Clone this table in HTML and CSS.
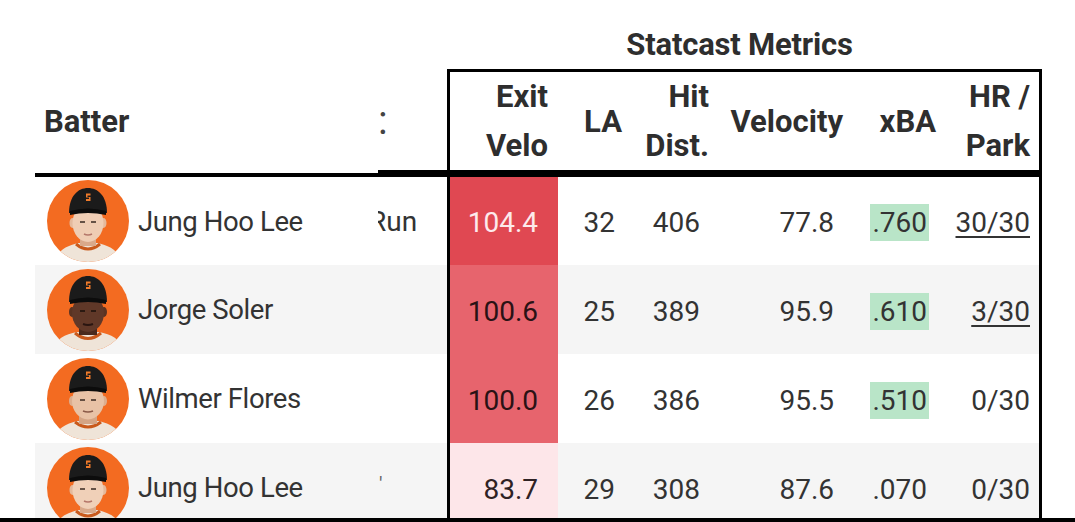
FILE: index.html
```html
<!DOCTYPE html>
<html>
<head>
<meta charset="utf-8">
<link rel="stylesheet" href="styles.css">
</head>
<body>
<div class="page">
  <div class="sheet">
    <div class="fixed">
      <div class="fixed-head">
        <div class="th-batter">Batter</div>
        <div class="th-clip"><span class="colon">:</span></div>
      </div>

      <div class="frow first">
        <div class="batter">
          <svg class="av" viewBox="0 0 82 82">
            <clipPath id="c1"><circle cx="41" cy="41" r="41"/></clipPath>
            <g clip-path="url(#c1)">
              <rect width="82" height="82" fill="#f36b21"/>
              <path d="M8 82 C10 70 20 66 31 63 L51 63 C62 66 72 70 74 82 Z" fill="#efe4d8"/>
              <path d="M29 64 Q41 74 53 64" fill="none" stroke="#c95a1c" stroke-width="3"/>
              <rect x="33" y="52" width="16" height="14" fill="#d9a98a"/>
              <ellipse cx="25.5" cy="43" rx="3" ry="5" fill="#e4b99c"/>
              <ellipse cx="56.5" cy="43" rx="3" ry="5" fill="#e4b99c"/>
              <ellipse cx="41" cy="43" rx="15.5" ry="19" fill="#efcdb4"/>
              <path d="M22 33 C22 16 31 8 41 8 C51 8 60 16 60 33 Z" fill="#1b1b1b"/>
              <path d="M23 31 Q41 26 59 31 L59 35 Q41 31 23 35 Z" fill="#0c0c0c"/>
              <path d="M39 13.5 h4.5 v2 h-3 v1.5 h3 v4 h-4.5 v-2 h3 v-1.5 h-3 z" fill="#f07a2a"/>
              <path d="M33 42 h5 M44 42 h5" stroke="#3a2a22" stroke-width="1.6"/>
              <path d="M37 54 q4 2 8 0" stroke="#b5776a" stroke-width="1.6" fill="none"/>
            </g>
          </svg>
          <span class="name">Jung Hoo Lee</span>
        </div>
        <div class="clip"><span class="cut">Run</span></div>
      </div>

      <div class="frow alt">
        <div class="batter">
          <svg class="av" viewBox="0 0 82 82">
            <clipPath id="c2"><circle cx="41" cy="41" r="41"/></clipPath>
            <g clip-path="url(#c2)">
              <rect width="82" height="82" fill="#f36b21"/>
              <path d="M6 82 C8 70 18 65 30 63 L52 63 C64 65 74 70 76 82 Z" fill="#efe4d8"/>
              <path d="M28 64 Q41 75 54 64" fill="none" stroke="#c95a1c" stroke-width="3"/>
              <rect x="32" y="52" width="18" height="14" fill="#4a2a1d"/>
              <ellipse cx="25" cy="43" rx="3" ry="5" fill="#5a3322"/>
              <ellipse cx="57" cy="43" rx="3" ry="5" fill="#5a3322"/>
              <ellipse cx="41" cy="44" rx="16" ry="19" fill="#603828"/>
              <path d="M22 33 C22 15 31 7 41 7 C51 7 60 15 60 33 Z" fill="#1b1b1b"/>
              <path d="M23 31 Q41 26 59 31 L59 35 Q41 31 23 35 Z" fill="#0c0c0c"/>
              <path d="M39 12.5 h4.5 v2 h-3 v1.5 h3 v4 h-4.5 v-2 h3 v-1.5 h-3 z" fill="#f07a2a"/>
              <path d="M33 42 h5 M44 42 h5" stroke="#1a0f0a" stroke-width="1.6"/>
              <path d="M36 55 q5 2 10 0" stroke="#2a1510" stroke-width="2" fill="none"/>
            </g>
          </svg>
          <span class="name">Jorge Soler</span>
        </div>
        <div class="clip"></div>
      </div>

      <div class="frow">
        <div class="batter">
          <svg class="av" viewBox="0 0 82 82">
            <clipPath id="c3"><circle cx="41" cy="41" r="41"/></clipPath>
            <g clip-path="url(#c3)">
              <rect width="82" height="82" fill="#f36b21"/>
              <path d="M7 82 C9 70 19 66 30 63 L52 63 C63 66 73 70 75 82 Z" fill="#efe4d8"/>
              <path d="M28 64 Q41 74 54 64" fill="none" stroke="#c95a1c" stroke-width="3"/>
              <rect x="32" y="52" width="18" height="14" fill="#d4a585"/>
              <ellipse cx="25" cy="43" rx="3" ry="5" fill="#dcae8f"/>
              <ellipse cx="57" cy="43" rx="3" ry="5" fill="#dcae8f"/>
              <ellipse cx="41" cy="43" rx="16" ry="18.5" fill="#e8c2a6"/>
              <path d="M22 33 C22 16 31 8 41 8 C51 8 60 16 60 33 Z" fill="#1b1b1b"/>
              <path d="M23 31 Q41 26 59 31 L59 35 Q41 31 23 35 Z" fill="#0c0c0c"/>
              <path d="M39 13.5 h4.5 v2 h-3 v1.5 h3 v4 h-4.5 v-2 h3 v-1.5 h-3 z" fill="#f07a2a"/>
              <path d="M33 42 h5 M44 42 h5" stroke="#3a2a22" stroke-width="1.6"/>
              <path d="M36 53 q5 2 10 0" stroke="#8a5a48" stroke-width="1.6" fill="none"/>
            </g>
          </svg>
          <span class="name">Wilmer Flores</span>
        </div>
        <div class="clip"></div>
      </div>

      <div class="frow alt">
        <div class="batter">
          <svg class="av" viewBox="0 0 82 82">
            <clipPath id="c4"><circle cx="41" cy="41" r="41"/></clipPath>
            <g clip-path="url(#c4)">
              <rect width="82" height="82" fill="#f36b21"/>
              <path d="M8 82 C10 70 20 66 31 63 L51 63 C62 66 72 70 74 82 Z" fill="#efe4d8"/>
              <path d="M29 64 Q41 74 53 64" fill="none" stroke="#c95a1c" stroke-width="3"/>
              <rect x="33" y="52" width="16" height="14" fill="#d9a98a"/>
              <ellipse cx="25.5" cy="43" rx="3" ry="5" fill="#e4b99c"/>
              <ellipse cx="56.5" cy="43" rx="3" ry="5" fill="#e4b99c"/>
              <ellipse cx="41" cy="43" rx="15.5" ry="19" fill="#f0d0b8"/>
              <path d="M22 33 C22 16 31 8 41 8 C51 8 60 16 60 33 Z" fill="#1b1b1b"/>
              <path d="M23 31 Q41 26 59 31 L59 35 Q41 31 23 35 Z" fill="#0c0c0c"/>
              <path d="M39 13.5 h4.5 v2 h-3 v1.5 h3 v4 h-4.5 v-2 h3 v-1.5 h-3 z" fill="#f07a2a"/>
              <path d="M33 42 h5 M44 42 h5" stroke="#3a2a22" stroke-width="1.6"/>
              <path d="M37 54 q4 2 8 0" stroke="#b5776a" stroke-width="1.6" fill="none"/>
            </g>
          </svg>
          <span class="name">Jung Hoo Lee</span>
        </div>
        <div class="clip"><span class="tick">'</span></div>
      </div>
    </div>

    <div class="group">
      <div class="group-title">Statcast Metrics</div>
      <div class="box">
        <div class="grid head">
          <div class="th c-ev">Exit<br>Velo</div>
          <div class="th c-la">LA</div>
          <div class="th c-hd">Hit<br>Dist.</div>
          <div class="th c-vel">Velocity</div>
          <div class="th c-xba">xBA</div>
          <div class="th c-hr">HR /<br>Park</div>
        </div>

        <div class="grid row first">
          <div class="td c-ev ev1">104.4</div>
          <div class="td c-la">32</div>
          <div class="td c-hd">406</div>
          <div class="td c-vel">77.8</div>
          <div class="td c-xba"><span class="hl">.760</span></div>
          <div class="td c-hr"><span class="ul">30/30</span></div>
        </div>

        <div class="grid row alt">
          <div class="td c-ev ev2">100.6</div>
          <div class="td c-la">25</div>
          <div class="td c-hd">389</div>
          <div class="td c-vel">95.9</div>
          <div class="td c-xba"><span class="hl">.610</span></div>
          <div class="td c-hr"><span class="ul">3/30</span></div>
        </div>

        <div class="grid row">
          <div class="td c-ev ev2">100.0</div>
          <div class="td c-la">26</div>
          <div class="td c-hd">386</div>
          <div class="td c-vel">95.5</div>
          <div class="td c-xba"><span class="hl">.510</span></div>
          <div class="td c-hr">0/30</div>
        </div>

        <div class="grid row alt">
          <div class="td c-ev ev4">83.7</div>
          <div class="td c-la">29</div>
          <div class="td c-hd">308</div>
          <div class="td c-vel">87.6</div>
          <div class="td c-xba"><span class="nohl">.070</span></div>
          <div class="td c-hr">0/30</div>
        </div>
      </div>
    </div>
  </div>
  <div class="bottom-bar"></div>
</div>
</body>
</html>
```

FILE: styles.css
```css
* { box-sizing: border-box; }

html, body {
  margin: 0;
  padding: 0;
  background: #ffffff;
}

body {
  width: 1075px;
  height: 522px;
  overflow: hidden;
  font-family: Roboto, "Noto Sans", sans-serif;
  color: #333333;
}

.page {
  display: flex;
  flex-direction: column;
  height: 522px;
}

.sheet {
  flex: 1;
  min-height: 0;
  overflow: hidden;
  display: flex;
  align-items: flex-start;
  padding-left: 35px;
}

.bottom-bar {
  height: 4px;
  background: #000000;
  flex: none;
}

/* ---------- fixed left part ---------- */
.fixed {
  width: 412px;
  flex: none;
  display: flex;
  flex-direction: column;
}

.fixed-head {
  display: flex;
  height: 177px;
  flex: none;
}

.th-batter {
  width: 343px;
  height: 177px;
  padding: 69px 0 0 9px;
  border-bottom: 4px solid #000;
  display: flex;
  align-items: center;
  font-weight: 700;
  font-size: 31px;
  color: #2e2e2e;
}

.th-clip {
  width: 69px;
  height: 177px;
  padding-top: 72px;
  border-bottom: 7px solid #000;
  display: flex;
  align-items: center;
  overflow: hidden;
}

.colon {
  font-size: 40px;
  font-weight: 400;
  color: #444;
  margin-left: 0;
  margin-top: -2px;
}

.frow {
  display: flex;
  height: 89px;
  flex: none;
}

.frow.first { height: 88px; }

.alt { background: #f5f5f5; }

.batter {
  width: 343px;
  display: flex;
  align-items: center;
  padding-left: 12px;
  gap: 9px;
}

.av {
  width: 82px;
  height: 82px;
  flex: none;
  display: block;
}

.name {
  font-size: 27.5px;
  color: #333;
  letter-spacing: -0.4px;
}

.clip {
  width: 69px;
  overflow: hidden;
  display: flex;
  align-items: center;
  white-space: nowrap;
}

.cut {
  font-size: 28px;
  color: #333;
  margin-left: -9px;
}

.tick {
  font-size: 20px;
  color: #666;
  margin-left: 1px;
  margin-bottom: 8px;
}

/* ---------- statcast group ---------- */
.group {
  width: 595px;
  flex: none;
  display: flex;
  flex-direction: column;
}

.group-title {
  flex: none;
  height: 69px;
  padding: 27px 10px 0 0;
  line-height: 36px;
  text-align: center;
  font-weight: 700;
  font-size: 31px;
  color: #2e2e2e;
  letter-spacing: -0.2px;
}

.box {
  flex: none;
  border: 3px solid #000;
  border-bottom: none;
}

.grid {
  display: grid;
  grid-template-columns: 108px 74px 87px 134px 93px 93px;
}

.head {
  height: 105px;
  border-bottom: 7px solid #000;
}

.th {
  display: flex;
  align-items: center;
  justify-content: flex-end;
  text-align: right;
  padding-right: 10px;
  font-weight: 700;
  font-size: 31px;
  line-height: 49px;
  color: #2e2e2e;
}

.th.c-hr { padding-right: 9px; }

.row {
  height: 89px;
}

.row.first { height: 88px; }

.td {
  display: flex;
  align-items: center;
  justify-content: flex-end;
  font-size: 28px;
  color: #333;
  padding-top: 3px;
}

.td.c-ev  { padding-right: 20px; }
.td.c-la  { padding-right: 17px; }
.td.c-hd  { padding-right: 19px; }
.td.c-vel { padding-right: 19px; }
.td.c-xba { padding-right: 17px; }
.td.c-hr  { padding-right: 9px; }

.ev1 { background: #e04852; color: #fdeaec; }
.ev2 { background: #e7646d; color: #2a1215; }
.ev4 { background: #fde6e9; color: #2f2224; }

.hl {
  background: #b9e5c8;
  padding: 1px 2px;
  line-height: 35px;
}

.nohl {
  padding: 1px 2px;
  line-height: 35px;
}

.ul {
  text-decoration: underline;
  text-decoration-thickness: 2px;
  text-underline-offset: 4px;
}
```
